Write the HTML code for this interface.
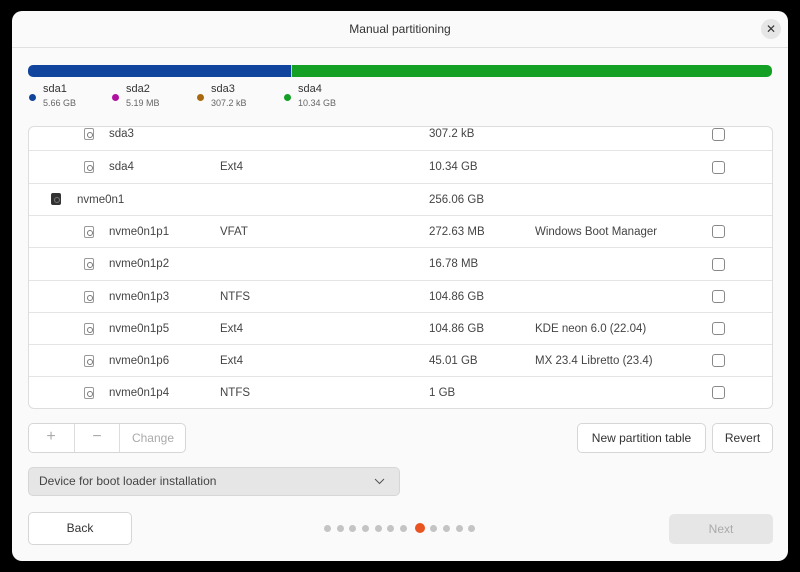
<!DOCTYPE html>
<html><head><style>
*{box-sizing:border-box;margin:0;padding:0}
body{width:800px;height:572px;background:#000;font-family:"Liberation Sans",sans-serif;color:#333;position:relative;overflow:hidden}
.win{position:absolute;left:12px;top:11px;width:776px;height:550px;background:#fafafa;border-radius:10px;overflow:hidden}
.title{position:absolute;left:0;top:0;width:776px;height:37px;border-bottom:1px solid #e0e0e0;text-align:center;line-height:37px;font-size:12px;color:#333}
.close{position:absolute;left:749px;top:8px;width:20px;height:20px;border-radius:50%;background:#e6e6e6;font-size:12px;line-height:20px;text-align:center}
.a{position:absolute}
.leg{font-size:11px;color:#333}
.leg small{display:block;font-size:9px;color:#666;margin-top:3px}
.dot{position:absolute;width:7px;height:7px;border-radius:50%}
.tbl{position:absolute;left:16px;top:115px;width:745px;height:283px;background:#fff;border:1px solid #ddd;border-radius:6px;overflow:hidden}
.row{position:absolute;left:0;width:745px;border-bottom:1px solid #e4e4e4;font-size:11.5px;color:#444}
.row span{position:absolute;top:0}
.ic{position:absolute;width:10px;height:12px;border:1px solid #999;border-radius:2px}
.ic::after{content:"";position:absolute;left:2px;top:3px;width:4px;height:4px;border:1px solid #777;border-radius:50%}
.cb{position:absolute;left:683px;width:13px;height:13px;border:1px solid #888;border-radius:3px;background:#fff}
.btn{position:absolute;border:1px solid #d6d6d6;border-radius:5px;background:#fff;font-size:12px;text-align:center;color:#333}
.pd{position:absolute;width:7px;height:7px;border-radius:50%;background:#c4c4c4;top:514px}
</style></head><body>
<div class="win">
<div class="title">Manual partitioning</div>
<div class="close">✕</div>
<div class="a" style="left:16px;top:54px;width:263px;height:12px;background:#11449c;border-radius:5px 0 0 5px"></div>
<div class="a" style="left:279px;top:54px;width:481px;height:12px;background:#14a025;border-radius:0 5px 5px 0;border-left:1px solid #ccc"></div>
<div class="dot" style="left:17px;top:83px;background:#11449c"></div>
<div class="a leg" style="left:31px;top:72px">sda1<small>5.66 GB</small></div>
<div class="dot" style="left:100px;top:83px;background:#b0109f"></div>
<div class="a leg" style="left:114px;top:72px">sda2<small>5.19 MB</small></div>
<div class="dot" style="left:185px;top:83px;background:#a9690f"></div>
<div class="a leg" style="left:199px;top:72px">sda3<small>307.2 kB</small></div>
<div class="dot" style="left:272px;top:83px;background:#14a025"></div>
<div class="a leg" style="left:286px;top:72px">sda4<small>10.34 GB</small></div>

<div class="tbl">
<div class="row" style="top:-10px;height:34px;line-height:34px"><div class="ic" style="left:55px;top:11px"></div><span style="left:80px">sda3</span><span style="left:400px">307.2 kB</span><div class="cb" style="top:11px"></div></div>
<div class="row" style="top:24px;height:33px;line-height:33px"><div class="ic" style="left:55px;top:10px"></div><span style="left:80px">sda4</span><span style="left:191px">Ext4</span><span style="left:400px">10.34 GB</span><div class="cb" style="top:10px"></div></div>
<div class="row" style="top:57px;height:32px;line-height:32px"><div class="ic" style="left:22px;top:9px;background:#333;border-color:#333"></div><span style="left:48px">nvme0n1</span><span style="left:400px">256.06 GB</span></div>
<div class="row" style="top:89px;height:32px;line-height:32px"><div class="ic" style="left:55px;top:10px"></div><span style="left:80px">nvme0n1p1</span><span style="left:191px">VFAT</span><span style="left:400px">272.63 MB</span><span style="left:506px">Windows Boot Manager</span><div class="cb" style="top:9px"></div></div>
<div class="row" style="top:121px;height:33px;line-height:33px"><div class="ic" style="left:55px;top:10px"></div><span style="left:80px">nvme0n1p2</span><span style="left:400px">16.78 MB</span><div class="cb" style="top:10px"></div></div>
<div class="row" style="top:154px;height:32px;line-height:32px"><div class="ic" style="left:55px;top:10px"></div><span style="left:80px">nvme0n1p3</span><span style="left:191px">NTFS</span><span style="left:400px">104.86 GB</span><div class="cb" style="top:9px"></div></div>
<div class="row" style="top:186px;height:32px;line-height:32px"><div class="ic" style="left:55px;top:10px"></div><span style="left:80px">nvme0n1p5</span><span style="left:191px">Ext4</span><span style="left:400px">104.86 GB</span><span style="left:506px">KDE neon 6.0 (22.04)</span><div class="cb" style="top:9px"></div></div>
<div class="row" style="top:218px;height:32px;line-height:32px"><div class="ic" style="left:55px;top:10px"></div><span style="left:80px">nvme0n1p6</span><span style="left:191px">Ext4</span><span style="left:400px">45.01 GB</span><span style="left:506px">MX 23.4 Libretto (23.4)</span><div class="cb" style="top:9px"></div></div>
<div class="row" style="top:250px;height:32px;line-height:32px;border-bottom:none"><div class="ic" style="left:55px;top:10px"></div><span style="left:80px">nvme0n1p4</span><span style="left:191px">NTFS</span><span style="left:400px">1 GB</span><div class="cb" style="top:9px"></div></div>
</div>

<div class="btn" style="left:16px;top:412px;width:158px;height:30px;color:#aaa"></div>
<div class="a" style="left:16px;top:412px;width:46px;height:30px;line-height:28px;text-align:center;color:#aaa;font-size:16px">+</div>
<div class="a" style="left:62px;top:413px;width:1px;height:28px;background:#ddd"></div>
<div class="a" style="left:62px;top:412px;width:46px;height:30px;line-height:28px;text-align:center;color:#aaa;font-size:16px">−</div>
<div class="a" style="left:107px;top:413px;width:1px;height:28px;background:#ddd"></div>
<div class="a" style="left:108px;top:412px;width:66px;height:30px;line-height:30px;text-align:center;color:#aaa;font-size:12px">Change</div>
<div class="btn" style="left:565px;top:412px;width:129px;height:30px;line-height:28px">New partition table</div>
<div class="btn" style="left:700px;top:412px;width:61px;height:30px;line-height:28px">Revert</div>
<div class="a" style="left:16px;top:456px;width:372px;height:29px;background:#e6e6e6;border:1px solid #d6d6d6;border-radius:5px;font-size:12px;line-height:27px;padding-left:10px;color:#444">Device for boot loader installation
<svg style="position:absolute;left:345px;top:10px" width="11" height="7"><path d="M1 1l4.5 4.5L10 1" stroke="#555" fill="none"/></svg></div>
<div class="btn" style="left:16px;top:501px;width:104px;height:33px;line-height:31px">Back</div>
<div class="a" style="left:657px;top:503px;width:104px;height:30px;line-height:30px;background:#e6e6e6;border-radius:5px;text-align:center;color:#aaa;font-size:12px">Next</div>
<div class="pd" style="left:312px"></div><div class="pd" style="left:325px"></div><div class="pd" style="left:337px"></div><div class="pd" style="left:350px"></div><div class="pd" style="left:363px"></div><div class="pd" style="left:375px"></div><div class="pd" style="left:388px"></div>
<div class="pd" style="left:403px;top:512px;width:10px;height:10px;background:#e95420"></div>
<div class="pd" style="left:418px"></div><div class="pd" style="left:431px"></div><div class="pd" style="left:444px"></div><div class="pd" style="left:456px"></div>
</div>
</body></html>
